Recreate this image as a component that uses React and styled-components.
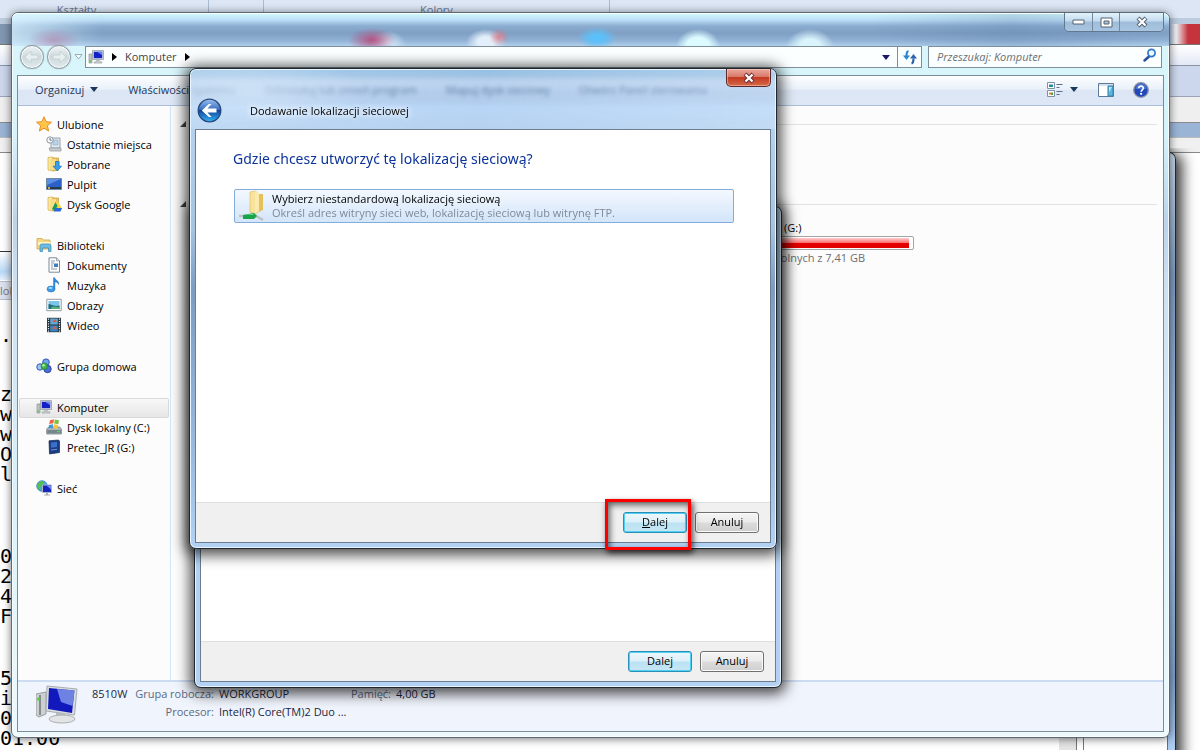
import React from 'react';
import styled, { createGlobalStyle, css } from 'styled-components';

const GlobalStyle = createGlobalStyle`
  * {
    box-sizing: border-box;
  }

  body {
    margin: 0;
    overflow: hidden;
    font-family: 'Open Sans', 'Noto Sans', sans-serif;
    font-size: 11px;
    color: #000;
  }

  button, input {
    font: inherit;
    color: inherit;
  }
`;

/* ---------- desktop and the windows at the back ---------- */

const Desktop = styled.div`
  position: relative;
  height: 100vh;
  overflow: hidden;
  background: #fff;
`;

const Ribbon = styled.div`
  display: grid;
  grid-template-columns: 54px 155px 55px 346px 1fr;
  height: 18px;
  background: #dce6f4;
`;

const RibbonGroup = styled.span`
  padding-top: 2px;
  border-right: 1px solid #a9bbd4;
  line-height: 16px;
  color: #66758f;
  text-align: ${({ $align }) => $align || 'left'};

  &:first-child,
  &:last-child {
    border-right: 0;
  }
`;

const Strip = styled.div`
  width: ${({ $short }) => ($short ? '60px' : 'auto')};
  height: ${({ $h }) => $h}px;
  background: ${({ $bg }) => $bg};
  border-bottom: 1px solid ${({ $line }) => $line || 'transparent'};
`;

const Notes = styled.div`
  padding-top: ${({ $top }) => $top}px;
  font: 20px/20px 'DejaVu Sans Mono', monospace;
  white-space: pre;
`;

const Tab = styled.div`
  width: 60px;
  height: 19px;
  background: #dde1ee;
  border: 1px solid #b5bccb;
  border-left: 0;
  color: #777;
  line-height: 17px;
`;

const BackWindow = styled.div`
  position: absolute;
  top: 152px;
  right: 24px;
  bottom: -20px;
  left: 300px;
  display: flex;
  justify-content: flex-end;
  border: 1px solid #222a33;
  border-left: 0;
  border-radius: 0 7px 0 0;
  background: linear-gradient(180deg, #c5d6e8, #7f9fc4 20%, #a9c8ee 60%, #7fa3cd 85%, #b9d8fb);
  padding-right: 7px;
  box-shadow: 6px 2px 14px rgba(0, 0, 0, 0.8);
  clip-path: inset(-4px -30px 0 0);
`;

const BackWindowBody = styled.div`
  flex: 1;
  display: flex;
  justify-content: flex-end;
  background: #fff;
  border-right: 1px solid #5d7388;
`;

const BackScroll = styled.div`
  width: 18px;
  margin-right: 90px;
  background: #e4e4e4;
  border-right: 1px solid #777;
  box-shadow: 6px 0 0 0 #fff, 7px 0 0 0 #777;
`;

/* ---------- explorer window ---------- */

const Explorer = styled.section`
  position: absolute;
  top: 12px;
  right: 30px;
  bottom: 12px;
  left: 11px;
  display: flex;
  flex-direction: column;
  border: 1px solid #5a6a78;
  border-radius: 7px;
  padding: 0 5px 5px;
  background: linear-gradient(180deg, #dbf6fb, #d4f4fb 120px, #bcd3ea 210px, #cfe2f3 280px, #d9f3fb 500px, #eef9fc);
  box-shadow: inset 0 0 0 1px rgba(255, 255, 255, 0.8), 0 1px 9px rgba(0, 0, 0, 0.55);
`;

const TitleBar = styled.header`
  display: flex;
  justify-content: flex-end;
  height: 33px;
  margin: 0 -5px;
  padding-right: 5px;
  border-radius: 6px 6px 0 0;
  background:
    radial-gradient(ellipse 26px 12px at 42px 27px, rgba(180, 120, 160, 0.55), transparent),
    radial-gradient(ellipse 24px 12px at 360px 27px, rgba(190, 60, 110, 0.8), transparent),
    radial-gradient(ellipse 18px 12px at 376px 30px, #d9ecfb, transparent),
    radial-gradient(ellipse 10px 9px at 487px 24px, rgba(225, 120, 130, 0.8), transparent),
    radial-gradient(ellipse 20px 13px at 474px 29px, #e3effb 40%, transparent),
    radial-gradient(ellipse 20px 11px at 585px 25px, #5cc0fa 30%, transparent),
    radial-gradient(ellipse 22px 17px at 686px 33px, #dcfbff 50%, transparent),
    radial-gradient(ellipse 24px 17px at 798px 33px, #d9f4fb 40%, transparent),
    linear-gradient(90deg, rgba(220, 245, 255, 0.7), transparent 90px, transparent 860px, rgba(70, 110, 150, 0.2) 1000px, transparent),
    linear-gradient(180deg, #d3fbfb, #bcdcf6 7px, #8badd0 13px, #7f9fc3 20px, #8fb0d4 27px, #b0cfeb);
  box-shadow: inset 0 1px rgba(255, 255, 255, 0.9);
`;

const Caption = styled.div`
  display: flex;
  align-self: flex-start;
  border: 1px solid #62788f;
  border-top: 0;
  border-radius: 0 0 5px 5px;
  overflow: hidden;
`;

const CaptionButton = styled.button`
  display: flex;
  align-items: center;
  justify-content: center;
  width: ${({ $wide }) => ($wide ? 44 : 27)}px;
  height: 18px;
  padding: 0;
  border: 0;
  border-left: 1px solid #72889e;
  background: linear-gradient(180deg, #e2f3fb, #c3dbee 45%, #9fbcd8 50%, #a8c6e2);

  &:first-child {
    border-left: 0;
  }
`;

const AddressRow = styled.div`
  display: flex;
  align-items: center;
  height: 22px;
  padding: 0 2px 0 3px;
`;

const RoundButton = styled.button`
  width: 24px;
  height: 24px;
  margin-right: 3px;
  padding: 0;
  border: 1px solid #8d989e;
  border-radius: 50%;
  background: linear-gradient(180deg, #eef4f5, #cdd9dc 50%, #dfeaec);
  box-shadow: inset 0 0 0 1px #f6fbfb, 0 0 1px #7e8b91;
`;

const PlainButton = styled.button`
  display: inline-flex;
  align-items: center;
  gap: 6px;
  padding: 0;
  border: 0;
  background: none;
  white-space: nowrap;
`;

const Field = styled.div`
  display: flex;
  align-items: center;
  height: 22px;
  border: 1px solid #7f8f99;
  background: #fbffff;
`;

const AddressField = styled(Field)`
  flex: 1;
  gap: 8px;
  margin-left: 2px;
  padding: 0 6px 0 2px;
`;

const Crumb = styled.a`
  padding-bottom: 1px;
  color: #444;
  text-decoration: none;
`;

const Spacer = styled.span`
  flex: 1;
`;

const RefreshField = styled(Field)`
  width: 25px;
  margin-left: -1px;
  justify-content: center;
`;

const SearchField = styled(Field)`
  width: 234px;
  margin-left: 6px;
  padding: 0 4px 1px 8px;
`;

const SearchInput = styled.input`
  flex: 1;
  min-width: 0;
  padding: 0;
  border: 0;
  outline: 0;
  background: none;
  font-style: italic;

  &::placeholder {
    color: #6a6f72;
    opacity: 1;
  }
`;

const Client = styled.div`
  flex: 1;
  display: flex;
  flex-direction: column;
  min-height: 0;
  margin-top: 7px;
  border: 1px solid #7d8b95;
  background: #fcfcfc;
`;

const Toolbar = styled.div`
  display: flex;
  align-items: center;
  gap: 29px;
  height: 30px;
  padding: 0 14px 2px 17px;
  border-bottom: 1px solid #a9bfdc;
  background: linear-gradient(180deg, #fdfeff, #eaf1fa 45%, #dce6f4 50%, #dde7f5);
  color: #1e395b;
`;

const ToolbarIcons = styled.div`
  display: flex;
  align-items: center;
  gap: 19px;
  margin-left: auto;
`;

const Panes = styled.div`
  flex: 1;
  display: flex;
  min-height: 0;
`;

const Sidebar = styled.nav`
  display: flex;
  flex-direction: column;
  gap: 21px;
  width: 153px;
  padding-top: 9px;
  border-right: 1px solid #d6e5f5;
`;

const TreeGroup = styled.ul`
  margin: 0;
  padding: 0;
  list-style: none;
`;

const TreeLink = styled.a`
  display: flex;
  align-items: center;
  gap: 5px;
  height: 20px;
  margin: 0 1px;
  padding: 0 0 2px ${({ $child }) => ($child ? 26 : 16)}px;
  border: 1px solid transparent;
  color: #000;
  text-decoration: none;
  white-space: nowrap;

  ${({ $active }) =>
    $active &&
    css`
      border-color: #d9d9d9;
      border-radius: 2px;
      background: linear-gradient(180deg, #f8f8f8, #e6e6e6);
    `}
`;

const Content = styled.main`
  flex: 1;
  padding: 8px 6px 0 9px;
`;

const GroupHead = styled.div`
  display: flex;
  align-items: center;
  gap: 6px;
  height: 20px;
  margin-bottom: ${({ $gap }) => $gap || 0}px;

  &::after {
    content: '';
    flex: 1;
    border-top: 1px solid #e2e2e2;
  }
`;

const Drive = styled.div`
  width: 280px;
  margin-left: 454px;
  padding-top: 6px;
  line-height: 15px;
`;

const DriveName = styled.div`
  padding-left: 150px;
`;

const DriveBar = styled.div`
  height: 14px;
  margin-top: 1px;
  padding: 1px;
  border: 1px solid #a3a3a3;
  border-radius: 2px;
  background: #fff;
`;

const DriveFill = styled.div`
  height: 100%;
  background: linear-gradient(180deg, #fcc, #f77 45%, #e60000 50%, #e00000);
`;

const DriveFree = styled.div`
  padding-right: 49px;
  text-align: right;
  color: #6d6d6d;
`;

const Details = styled.footer`
  display: flex;
  gap: 14px;
  height: 51px;
  padding: 3px 18px;
  border-top: 2px solid #cbdcf2;
  background: #f0f4fc;
  color: #1b2740;
`;

const DetailGrid = styled.dl`
  display: grid;
  grid-template-columns: 40px 77px 127px 40px auto;
  grid-auto-rows: 18px;
  column-gap: 5px;
  margin: 0;
  line-height: 18px;
  white-space: nowrap;
`;

const Term = styled.dt`
  display: flex;
  justify-content: flex-end;
  grid-column: ${({ $col }) => $col};
  color: #5a6a85;
`;

const Value = styled.dd`
  margin: 0;
`;

/* ---------- wizard dialogs ---------- */

const Dialog = styled.section`
  position: absolute;
  display: flex;
  flex-direction: column;
  border: 1px solid #20262c;
  border-radius: 7px;
  padding: 0 5px 5px;
  background: #b3d2f3;
  box-shadow: inset 0 0 0 1px #e6f5ff, 0 2px 14px 4px rgba(0, 0, 0, 0.7);
`;

const RearDialog = styled(Dialog)`
  top: 206px;
  left: 194px;
  width: 588px;
  height: 482px;
  padding-top: 40px;
`;

const FrontDialog = styled(Dialog)`
  top: 68px;
  left: 189px;
  width: 588px;
  height: 481px;
  background:
    radial-gradient(ellipse 120px 34px at 60px 24px, rgba(215, 233, 250, 0.6), transparent),
    linear-gradient(100deg, rgba(225, 240, 255, 0.25), transparent 50%, rgba(225, 240, 255, 0.3)) 0 0 / 100% 60px no-repeat,
    linear-gradient(180deg, rgba(140, 184, 224, 0.9), rgba(140, 180, 226, 0.55) 14px, rgba(140, 180, 226, 0.55) 30px, rgba(176, 209, 245, 0.9) 38px, rgba(178, 207, 238, 0.96) 60px, #a6c3e2 160px, #7d9cc2 220px, #9dbde2 400px, #b3d2f3);
  backdrop-filter: blur(2px);
`;

const CloseCorner = styled.button`
  display: flex;
  align-items: center;
  justify-content: center;
  align-self: flex-end;
  width: 45px;
  height: 18px;
  padding: 0;
  border: 1px solid #5b2a2c;
  border-top: 0;
  border-radius: 0 0 5px 5px;
  background: linear-gradient(180deg, #e9aa9d, #d9796a 45%, #c23a22 50%, #d66a48);
  box-shadow: inset 0 0 0 1px rgba(255, 210, 200, 0.5);
`;

const WizardHeader = styled.header`
  display: flex;
  align-items: center;
  gap: 28px;
  height: 42px;
  padding: 4px 0 0 2px;
`;

const BackButton = styled.button`
  width: 25px;
  height: 25px;
  padding: 0;
  border: 0;
  background: none;
`;

const WizardTitle = styled.h1`
  margin: 0;
  font-size: 11px;
  font-weight: 400;
  text-shadow: 0 0 6px #fff, 0 0 6px #fff;
`;

const Sheet = styled.div`
  flex: 1;
  display: flex;
  flex-direction: column;
  border: 1px solid #6c7d90;
  background: #fff;
`;

const SheetBody = styled.div`
  flex: 1;
  padding: 17px 37px 0;
`;

const Question = styled.h2`
  margin: 0 0 18px;
  font-family: 'Noto Sans', 'Open Sans', sans-serif;
  font-size: 14px;
  font-weight: 400;
  line-height: 24px;
  color: #0b3399;
`;

const Choice = styled.button`
  display: flex;
  align-items: center;
  gap: 5px;
  width: 100%;
  height: 34px;
  margin-left: 1px;
  padding: 0 2px 1px;
  border: 1px solid #86acd9;
  border-radius: 2px;
  background: linear-gradient(180deg, #f3f8fe, #d3e5fa);
  line-height: 14px;
  text-align: left;
`;

const ChoiceNote = styled.span`
  display: block;
  color: #7e8a98;
`;

const Actions = styled.footer`
  display: flex;
  align-items: flex-start;
  justify-content: flex-end;
  gap: 8px;
  height: 40px;
  padding: 9px 11px 0;
  border-top: 1px solid #dfdfdf;
  background: #f0f0f0;
`;

const ActionButton = styled.button`
  display: block;
  width: 64px;
  height: 21px;
  padding: 0 0 2px;
  border: 1px solid ${({ $primary }) => ($primary ? '#2c8fb8' : '#707070')};
  border-radius: 3px;
  background: ${({ $primary }) =>
    $primary
      ? 'linear-gradient(180deg, #eef7fb, #dcf0f8 48%, #b9e2f3 52%, #c8e6f3)'
      : 'linear-gradient(180deg, #f4f4f4, #ebebeb 48%, #dcdcdc 52%, #cfcfcf)'};
  box-shadow: inset 0 0 0 1px ${({ $primary }) => ($primary ? '#4fd0f5' : '#fbfbfb')};
  line-height: 17px;
`;

const Marked = styled.div`
  position: relative;

  &::after {
    content: '';
    position: absolute;
    inset: -13px -4px -17px -18px;
    border: 3px solid #fb0000;
    box-shadow: 2px 3px 6px rgba(0, 0, 0, 0.7), inset 2px 3px 6px rgba(0, 0, 0, 0.6);
    pointer-events: none;
  }
`;

/* ---------- icons ---------- */

const Svg = ({ size = 16, children }) => (
  <svg width={size} height={size} viewBox="0 0 16 16" aria-hidden="true">
    {children}
  </svg>
);

const Folder = () => (
  <g>
    <path d="M2 1.5 7 1v14l-5-1z" fill="#fae9a4" stroke="#d6ae4c" strokeWidth=".7" />
    <path d="M7 2h5.5v12L7 15z" fill="#e9c464" stroke="#c99c38" strokeWidth=".7" />
    <path d="M4 3h6v11H4z" fill="#f8dd88" />
  </g>
);

const Screen = () => (
  <g>
    <path d="M1 5h3v9H1z" fill="#bfc6c2" stroke="#7f8a86" strokeWidth=".6" />
    <path d="M1.8 11.5h1.2v1.2H1.8z" fill="#3cb82e" />
    <path d="M4.5 1.5h11v9h-11z" fill="#d6dadf" stroke="#8c949e" strokeWidth=".7" />
    <path d="M5.8 2.8h8.4v6.4H5.8z" fill="#1320c4" />
    <path d="M9 2.8h5.2v3.5z" fill="#6a86f0" />
    <path d="M8.5 10.8h3l.5 2h2v1.4H6v-1.4h2z" fill="#c2c6ca" stroke="#969ca2" strokeWidth=".4" />
  </g>
);

const icons = {
  star: (
    <path
      d="m8 .8 2.1 4.9 5.3.5-4 3.5 1.2 5.3L8 12.2 3.4 15l1.2-5.3-4-3.5 5.3-.5z"
      fill="#ffc648"
      stroke="#e88a24"
      strokeLinejoin="round"
    />
  ),
  recent: (
    <g>
      <path d="M5 2h9v10H5z" fill="#e3ecf4" stroke="#95a0aa" />
      <path d="M7 4h5v5H7z" fill="#b9d3ea" stroke="#8ea8c0" strokeWidth=".6" />
      <path d="M3 12h12v3H4z" fill="#c9ccd0" stroke="#90959a" strokeWidth=".7" />
      <circle cx="4" cy="4" r="3.2" fill="#f5f8fa" stroke="#8c99a6" />
      <path d="M4 2v2.2h1.7" fill="none" stroke="#556" strokeWidth=".8" />
    </g>
  ),
  download: (
    <g>
      <Folder />
      <path d="M9.5 5.500h3.6v4.700h2.4L11.3 15l-4.2-4.8h2.4z" fill="#36a0ec" stroke="#1668ae" strokeWidth=".7" />
    </g>
  ),
  desktop: (
    <g>
      <path d="M.5 2.5h15v11H.5z" fill="#2c62c8" stroke="#6f87a4" />
      <path d="M1 3h14L1 9z" fill="#5c8fe2" />
      <path d="M1 11h14v2H1z" fill="#28384d" />
      <circle cx="3" cy="12" r="1.1" fill="#f2c34a" />
    </g>
  ),
  google: (
    <g>
      <Folder />
      <path d="m9.500 6 2.500-.5 4 7h-3.500z" fill="#ffd23f" />
      <path d="m9.500 6 2 4L8.500 15l-2.500-2z" fill="#19a058" />
      <path d="M9 12h7l-1.500 3.500H8z" fill="#2a66dc" />
    </g>
  ),
  libraries: (
    <g>
      <path d="M1 3V1.500h5l1 1.500h7v9H1z" fill="#f5da83" stroke="#cfa445" strokeWidth=".8" />
      <path d="M2 5h12v3H2z" fill="#fdf3c8" />
      <path d="M4 14.500V9q0-2 2-2h7q2 0 2 2v5.500h-2.500V11H6.500v3.500z" fill="#6fbce2" stroke="#3386b6" strokeWidth=".7" />
    </g>
  ),
  documents: (
    <g>
      <path d="M3 .8h7.500l3 3v11.400H3z" fill="#fff" stroke="#7d8894" />
      <path d="M10.500.8v3h3" fill="#dce3ea" stroke="#7d8894" strokeWidth=".7" />
      <path d="M5 4h4M5 6h3M5 8h2M5 10h2M5 12h6" stroke="#8796a8" />
      <path d="M8 6.500h4V10H8z" fill="#3b7fc0" />
    </g>
  ),
  music: (
    <g>
      <ellipse cx="5" cy="12" rx="4" ry="3" fill="#3c9be6" stroke="#1a6bb4" strokeWidth=".5" />
      <path d="M7.200 12.500V.5h1.800c.3 2.600 5 3.200 4 8-.6-2-2-2.900-3.800-3.200v7.200z" fill="#2f86d2" />
      <ellipse cx="4.500" cy="11" rx="2" ry="1" fill="#a5dbff" />
    </g>
  ),
  pictures: (
    <g>
      <path d="M.8 2.300h14.400v11.400H.8z" fill="#fff" stroke="#919aa3" />
      <path d="M2.500 4h11v8h-11z" fill="#7cc4ea" />
      <path d="M2.500 7c3 0 5 3 11 1.500V12h-11z" fill="#1f6e7c" />
      <path d="M5 10.500c3-2 5 0 8.500-.8V12H5z" fill="#5cae78" />
    </g>
  ),
  video: (
    <g>
      <path d="M1 .8h14v14.400H1z" fill="#27343e" />
      <path d="M2.500 1.500v13.500M13.500 1.500v13.500" stroke="#e8edf0" strokeWidth="1.200" strokeDasharray="1.200 1.200" />
      <path d="M4.200 1.500h7.600v6H4.200z" fill="#5fa9da" />
      <path d="M4.200 8.500h7.600v6H4.200z" fill="#3b84c0" />
      <path d="m6 5 3-3 2 3zM6 12l3-3 2 3z" fill="#d06040" />
    </g>
  ),
  homegroup: (
    <g>
      <circle cx="10" cy="4.200" r="3.300" fill="#6fa4ea" stroke="#3158b4" />
      <circle cx="4" cy="9" r="3.200" fill="#9cc6f5" stroke="#3158b4" />
      <circle cx="11.500" cy="11" r="3.700" fill="#4a70d6" stroke="#2b479c" />
      <circle cx="8.200" cy="8.200" r="3.200" fill="#45b84a" stroke="#1c7c31" strokeWidth=".7" />
      <circle cx="7.500" cy="7.300" r="1.200" fill="#b6f0ac" />
    </g>
  ),
  computer: <Screen />,
  disk: (
    <g>
      <path d="m.7 10 2-2h11l1.700 2v5H.7z" fill="#aeb6bb" stroke="#6c757b" strokeWidth=".7" />
      <path d="M1.200 11h13.800v3.300H1.200z" fill="#77868c" />
      <path d="M11 12h3v1.200h-3z" fill="#4be04b" />
      <path d="m4 1.200 4-1-.6 4-4.200.8z" fill="#f0643c" />
      <path d="m8.800.5 4.200.8-.6 4-4.200-.8z" fill="#7dc142" />
      <path d="m3 6 4.200-.8-.6 4H2.500z" fill="#3c97dc" />
      <path d="m8 5.300 4.200.8-.6 3.600-4.200-.5z" fill="#fbc634" />
    </g>
  ),
  card: (
    <g>
      <path d="m3 1.800 9.500-.8L13.500 2v11.500L3.500 15z" fill="#1b3d86" stroke="#122650" strokeWidth=".7" />
      <path d="m5 3.500 6-.5v5l-6 .8z" fill="#3d70ca" />
      <path d="m5 11 6-.7" stroke="#8aa8e0" strokeWidth=".8" />
    </g>
  ),
  network: (
    <g>
      <circle cx="6" cy="6" r="5.300" fill="#4aa6e6" stroke="#2372b2" strokeWidth=".7" />
      <path d="M2.500 2.800C5 0 7.500 1 8 2.500 6 4 7 6 4.500 6.500 3.500 8 5 10 4 10.500 1 9 0 5 2.500 2.800z" fill="#53bf55" />
      <path d="M6.500 5h9v7.500h-9z" fill="#1526bd" stroke="#aab4c2" />
      <path d="M10.500 5.500h4.500v4z" fill="#6f8cf3" />
      <path d="M10 13h2v1.500h2v1H8v-1h2z" fill="#aab0b6" />
    </g>
  ),
};

const Arrow = ({ down, color = '#000' }) => (
  <svg width={down ? 9 : 5} height={down ? 5 : 8} aria-hidden="true">
    <path d={down ? 'M0 0h8L4 5z' : 'M0 0l5 4-5 4z'} fill={color} />
  </svg>
);

const ExpandMark = () => (
  <svg width="7" height="7" aria-hidden="true">
    <path d="M6 0v6H0z" fill="#404040" />
  </svg>
);

const NavArrow = ({ flip }) => (
  <svg width="22" height="22" viewBox="0 0 22 22" aria-hidden="true">
    <path
      d={flip ? 'M18 11 12 5v4H5v4h7v4z' : 'M4 11l6-6v4h7v4h-7v4z'}
      fill="#e6eeef"
      stroke="#c2ced1"
      strokeWidth=".8"
    />
  </svg>
);

const BackIcon = () => (
  <svg width="25" height="25" viewBox="0 0 25 25" aria-hidden="true">
    <defs>
      <linearGradient id="backFill" x1="0" y1="0" x2="0" y2="1">
        <stop offset="0" stopColor="#9ac0ee" />
        <stop offset=".45" stopColor="#3a6fc2" />
        <stop offset=".5" stopColor="#10459f" />
        <stop offset="1" stopColor="#35b5f5" />
      </linearGradient>
    </defs>
    <circle cx="12.500" cy="12.500" r="11.300" fill="url(#backFill)" stroke="#27477c" strokeWidth="1.300" />
    <path d="M4.800 12.500 11.800 6h2.700l-4 4.500h9v4h-9l4 4.500h-2.700z" fill="#fff" />
  </svg>
);

const CloseGlyph = ({ stroke }) => (
  <svg width="14" height="12" viewBox="0 0 14 12" aria-hidden="true">
    <path d="m3 2 8 8M11 2l-8 8" stroke={stroke} strokeWidth="4.200" />
    <path d="m3.500 2.500 7 7M10.500 2.500l-7 7" stroke="#fff" strokeWidth="2.200" />
  </svg>
);

const BigComputer = () => (
  <svg width="42" height="40" viewBox="0 0 42 40" aria-hidden="true">
    <path d="m0 9 10-2v22l-7 3-3-2z" fill="#cdd0d0" stroke="#9a9fa0" />
    <path d="M4 10v20" stroke="#868c8d" strokeWidth="2" />
    <circle cx="2.500" cy="14" r="1.600" fill="#47d92b" />
    <path d="m11 1 30 3-2.500 26L10 26z" fill="#dadddf" stroke="#a8adb0" />
    <path d="m13 3 25.500 2.500L36 28l-24-4z" fill="#1119bd" />
    <path d="m21 4 17.500 1.500L36.500 21 25 17z" fill="#8ea6f2" opacity=".75" />
    <path d="M20 28h9l1 5H20z" fill="#b9bdbf" />
    <ellipse cx="26" cy="34" rx="13" ry="4" fill="#e2e4e5" stroke="#abb0b2" />
  </svg>
);

const NetFolder = () => (
  <svg width="30" height="32" viewBox="0 0 30 32" aria-hidden="true">
    <path d="m13 2 6-1v23l-6-2z" fill="#f7e39a" stroke="#d9b85e" strokeWidth=".6" />
    <path d="M18 4h8v16l-8 4z" fill="#e5c05e" />
    <path d="m18 1 4 2v18l-4 3z" fill="#fbe9ae" />
    <path d="M2 26h17l7 4" fill="none" stroke="#bac2c5" strokeWidth="2.500" />
    <path d="m6 25 11-2 3 3-3 3H6z" fill="#18a449" />
    <path d="m8 25 8-1 1 1z" fill="#70df8d" />
  </svg>
);

const sections = [
  [
    ['Ulubione', 'star'],
    ['Ostatnie miejsca', 'recent'],
    ['Pobrane', 'download'],
    ['Pulpit', 'desktop'],
    ['Dysk Google', 'google'],
  ],
  [
    ['Biblioteki', 'libraries'],
    ['Dokumenty', 'documents'],
    ['Muzyka', 'music'],
    ['Obrazy', 'pictures'],
    ['Wideo', 'video'],
  ],
  [['Grupa domowa', 'homegroup']],
  [
    ['Komputer', 'computer'],
    ['Dysk lokalny (C:)', 'disk'],
    ['Pretec_JR (G:)', 'card'],
  ],
  [['Sieć', 'network']],
];

function Background() {
  return (
    <>
      <Ribbon>
        <RibbonGroup />
        <RibbonGroup>&nbsp;Kształty</RibbonGroup>
        <RibbonGroup />
        <RibbonGroup $align="center">Kolory</RibbonGroup>
        <RibbonGroup />
      </Ribbon>
      <Strip $h={6} $bg="#bccbdd" />
      <Strip $h={21} $bg="linear-gradient(90deg, #8196b0 97%, #eef3f8 98%, #c4343c 99%)" $line="#777" />
      <Strip $h={21} $bg="linear-gradient(180deg, #fff, #e2e8f6)" $line="#8a94a5" />
      <Strip $h={31} $bg="#ccd6ec" $line="#9aa5b8" />
      <Strip $h={26} $bg="#efefef" $line="#8a8a8a" />
      <Strip $h={15} $bg="#9ab4d6" $line="#bbb" />
      <Strip $h={15} $bg="#f0f0f0" $line="#888" />
      <Strip $short $h={99} $bg="#fff" $line="#333" />
      <Strip $short $h={29} $bg="linear-gradient(180deg, #fff, #b9d9f7 70%, #e5f1fc)" />
      <Tab>lok</Tab>
      <Notes $top={25}>.</Notes>
      <Notes $top={39}>{'z\nw\nw\nO\nl'}</Notes>
      <Notes $top={62}>{'0\n2\n4\nF'}</Notes>
      <Notes $top={42}>{'5\ni\n0\n01:00'}</Notes>
      <BackWindow>
        <BackWindowBody>
          <BackScroll />
        </BackWindowBody>
      </BackWindow>
    </>
  );
}

function ExplorerWindow() {
  return (
    <Explorer>
      <TitleBar>
        <Caption>
          <CaptionButton aria-label="Minimalizuj">
            <svg width="13" height="6">
              <path d="M1 1h11v4H1z" fill="#fff" stroke="#566270" />
            </svg>
          </CaptionButton>
          <CaptionButton aria-label="Maksymalizuj">
            <svg width="13" height="11">
              <path d="M1 1h11v9H1z" fill="#fff" stroke="#566270" />
              <path d="M4 4h5v3H4z" fill="#aac3d9" stroke="#566270" />
            </svg>
          </CaptionButton>
          <CaptionButton $wide aria-label="Zamknij">
            <CloseGlyph stroke="#566270" />
          </CaptionButton>
        </Caption>
      </TitleBar>
      <AddressRow>
        <RoundButton aria-label="Wstecz">
          <NavArrow />
        </RoundButton>
        <RoundButton aria-label="Dalej">
          <NavArrow flip />
        </RoundButton>
        <svg width="9" height="6" aria-hidden="true">
          <path d="M1 .5h7L4.500 5z" fill="#f4fbfb" stroke="#9daeb3" />
        </svg>
        <AddressField>
          <Svg>{icons.computer}</Svg>
          <Arrow />
          <Crumb href="#komputer">Komputer</Crumb>
          <Arrow />
          <Spacer />
          <Arrow down color="#18186c" />
        </AddressField>
        <RefreshField>
          <PlainButton aria-label="Odśwież">
            <svg width="16" height="16" viewBox="0 0 16 16">
              <path d="M6.500 2C4.500 2.500 4.500 4.500 4.500 7" fill="none" stroke="#2e86cf" strokeWidth="2.200" />
              <path d="M1 6.500h7L4.500 11z" fill="#2e86cf" />
              <path d="M9.500 14.500c2-.5 2-2.500 2-5" fill="none" stroke="#2a62ae" strokeWidth="2.200" />
              <path d="M8 9.500h7L11.500 5z" fill="#2a62ae" />
            </svg>
          </PlainButton>
        </RefreshField>
        <SearchField>
          <SearchInput id="search" type="text" placeholder="Przeszukaj: Komputer" aria-label="Przeszukaj: Komputer" />
          <label htmlFor="search">
            <svg width="14" height="14" viewBox="0 0 14 14" aria-hidden="true">
              <path d="M6 8.500 1.500 12.500" stroke="#2c4f9a" strokeWidth="2.400" strokeLinecap="round" />
              <circle cx="8.500" cy="5" r="3.600" fill="#eff9ff" stroke="#2e78cc" strokeWidth="1.700" />
            </svg>
          </label>
        </SearchField>
      </AddressRow>
      <Client>
        <Toolbar>
          <PlainButton>
            Organizuj
            <Arrow down color="#1e395b" />
          </PlainButton>
          <PlainButton>Właściwości systemu</PlainButton>
          <PlainButton>Odinstaluj lub zmień program</PlainButton>
          <PlainButton>Mapuj dysk sieciowy</PlainButton>
          <PlainButton>Otwórz Panel sterowania</PlainButton>
          <ToolbarIcons>
            <PlainButton aria-label="Zmień widok">
              <svg width="18" height="16" viewBox="0 0 18 16">
                <path d="M1.500.500h7v6h-7zM1.500 8.500h7v6h-7z" fill="#fff" stroke="#7d90a6" />
                <path d="M3 2.500h4V5H3z" fill="#2a86a8" />
                <path d="M3 10.500h2v2H3z" fill="#e8862a" />
                <path d="M5 10.500h2V13H5z" fill="#47a83b" />
                <path d="M10.500 2.500h6M10.500 5.500h3M10.500 9.500h6M10.500 12.500h3" stroke="#5b6e86" />
              </svg>
              <Arrow down color="#1e395b" />
            </PlainButton>
            <PlainButton aria-label="Okienko podglądu">
              <svg width="16" height="14" viewBox="0 0 16 14">
                <path d="M.5.500h15v13H.5z" fill="#fff" stroke="#5f7a98" />
                <path d="M1 1h14v2H1z" fill="#d4e0ee" />
                <path d="M10 3h5v10h-5z" fill="#58b9df" stroke="#3b7fa8" />
                <path d="M11 4h3L11 9z" fill="#b9ecfb" />
              </svg>
            </PlainButton>
            <PlainButton aria-label="Pomoc">
              <svg width="16" height="16" viewBox="0 0 16 16">
                <circle cx="8" cy="8" r="7.300" fill="#2148b8" stroke="#8b94a6" strokeWidth="1.300" />
                <path d="M2.500 7a5.500 5.500 0 0 1 11 0z" fill="#5d86df" opacity=".7" />
                <path d="M5.700 6.300c.1-3 4.700-2.800 4.600-.1 0 1.500-2.100 1.700-2.200 3.500" fill="none" stroke="#fff" strokeWidth="1.600" />
                <circle cx="8.100" cy="11.800" r="1.100" fill="#fff" />
              </svg>
            </PlainButton>
          </ToolbarIcons>
        </Toolbar>
        <Panes>
          <Sidebar>
            {sections.map((section) => (
              <TreeGroup key={section[0][0]}>
                {section.map(([label, icon], i) => (
                  <li key={label}>
                    <TreeLink href={`#${icon}`} $child={i > 0} $active={label === 'Komputer'}>
                      <Svg>{icons[icon]}</Svg>
                      {label}
                    </TreeLink>
                  </li>
                ))}
              </TreeGroup>
            ))}
          </Sidebar>
          <Content>
            <GroupHead $gap={60}>
              <ExpandMark />
            </GroupHead>
            <GroupHead>
              <ExpandMark />
            </GroupHead>
            <Drive>
              <DriveName>(G:)</DriveName>
              <DriveBar>
                <DriveFill style={{ width: '99%' }} />
              </DriveBar>
              <DriveFree>wolnych z 7,41 GB</DriveFree>
            </Drive>
          </Content>
        </Panes>
        <Details>
          <BigComputer />
          <DetailGrid>
            <Value>8510W</Value>
            <Term>Grupa robocza:</Term>
            <Value>WORKGROUP</Value>
            <Term>Pamięć:</Term>
            <Value>4,00 GB</Value>
            <Term $col={2}>Procesor:</Term>
            <Value>Intel(R) Core(TM)2 Duo ...</Value>
          </DetailGrid>
        </Details>
      </Client>
    </Explorer>
  );
}

function App() {
  return (
    <>
      <GlobalStyle />
      <Desktop>
        <Background />
        <ExplorerWindow />
        <RearDialog>
          <Sheet>
            <SheetBody />
            <Actions>
              <ActionButton $primary>Dalej</ActionButton>
              <ActionButton>Anuluj</ActionButton>
            </Actions>
          </Sheet>
        </RearDialog>
        <FrontDialog>
          <CloseCorner aria-label="Zamknij">
            <CloseGlyph stroke="#6e3034" />
          </CloseCorner>
          <WizardHeader>
            <BackButton aria-label="Wstecz">
              <BackIcon />
            </BackButton>
            <WizardTitle>Dodawanie lokalizacji sieciowej</WizardTitle>
          </WizardHeader>
          <Sheet>
            <SheetBody>
              <Question>Gdzie chcesz utworzyć tę lokalizację sieciową?</Question>
              <Choice>
                <NetFolder />
                <span>
                  Wybierz niestandardową lokalizację sieciową
                  <ChoiceNote>Określ adres witryny sieci web, lokalizację sieciową lub witrynę FTP.</ChoiceNote>
                </span>
              </Choice>
            </SheetBody>
            <Actions>
              <Marked>
                <ActionButton $primary>
                  <u>D</u>alej
                </ActionButton>
              </Marked>
              <ActionButton>Anuluj</ActionButton>
            </Actions>
          </Sheet>
        </FrontDialog>
      </Desktop>
    </>
  );
}

export default App;
